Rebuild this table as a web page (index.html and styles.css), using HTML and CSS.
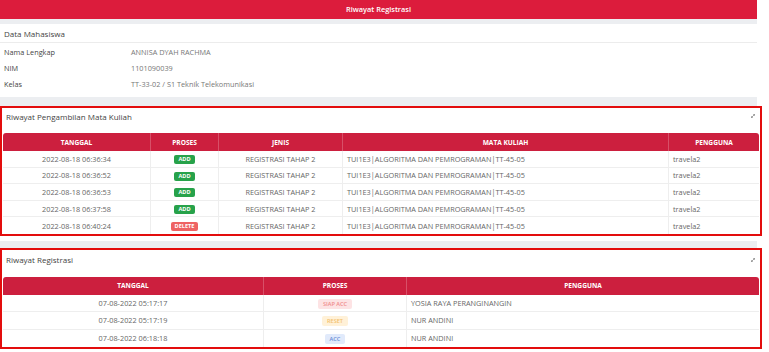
FILE: index.html
```html
<!DOCTYPE html>
<html lang="id">
<head>
<meta charset="utf-8">
<title>Riwayat Registrasi</title>
<link rel="stylesheet" href="styles.css">
</head>
<body>
<div class="page">
  <header class="topbar">Riwayat Registrasi</header>
  <main class="content">
    <section class="info-card">
      <div class="info-title">Data Mahasiswa</div>
      <div class="info-grid">
        <div class="lbl">Nama Lengkap</div><div class="val">ANNISA DYAH RACHMA</div>
        <div class="lbl">NIM</div><div class="val">1101090039</div>
        <div class="lbl">Kelas</div><div class="val">TT-33-02 / S1 Teknik Telekomunikasi</div>
      </div>
    </section>

    <section class="panel">
      <div class="frame frame-1">
        <div class="frame-head">
          <span>Riwayat Pengambilan Mata Kuliah</span>
          <svg class="expand" width="4" height="4" viewBox="0 0 4 4"><path d="M0.5 3.5 L3.5 0.5 M2.2 0.5 H3.5 V1.8 M0.5 2.2 V3.5 H1.8" fill="none" stroke="#666" stroke-width="0.6"/></svg>
        </div>
        <table class="tbl tbl-1">
          <colgroup><col class="c-tgl"><col class="c-pro"><col class="c-jen"><col class="c-mk"><col class="c-usr"></colgroup>
          <thead>
            <tr><th>TANGGAL</th><th>PROSES</th><th>JENIS</th><th>MATA KULIAH</th><th>PENGGUNA</th></tr>
          </thead>
          <tbody>
            <tr><td class="ctr">2022-08-18 06:36:34</td><td class="ctr"><span class="badge add">ADD</span></td><td class="ctr">REGISTRASI TAHAP 2</td><td>TUI1E3|ALGORITMA DAN PEMROGRAMAN|TT-45-05</td><td>travela2</td></tr>
            <tr><td class="ctr">2022-08-18 06:36:52</td><td class="ctr"><span class="badge add">ADD</span></td><td class="ctr">REGISTRASI TAHAP 2</td><td>TUI1E3|ALGORITMA DAN PEMROGRAMAN|TT-45-05</td><td>travela2</td></tr>
            <tr><td class="ctr">2022-08-18 06:36:53</td><td class="ctr"><span class="badge add">ADD</span></td><td class="ctr">REGISTRASI TAHAP 2</td><td>TUI1E3|ALGORITMA DAN PEMROGRAMAN|TT-45-05</td><td>travela2</td></tr>
            <tr><td class="ctr">2022-08-18 06:37:58</td><td class="ctr"><span class="badge add">ADD</span></td><td class="ctr">REGISTRASI TAHAP 2</td><td>TUI1E3|ALGORITMA DAN PEMROGRAMAN|TT-45-05</td><td>travela2</td></tr>
            <tr><td class="ctr">2022-08-18 06:40:24</td><td class="ctr"><span class="badge del">DELETE</span></td><td class="ctr">REGISTRASI TAHAP 2</td><td>TUI1E3|ALGORITMA DAN PEMROGRAMAN|TT-45-05</td><td>travela2</td></tr>
          </tbody>
        </table>
      </div>
    </section>

    <section class="panel">
      <div class="frame frame-2">
        <div class="frame-head head-2">
          <span>Riwayat Registrasi</span>
          <svg class="expand" width="4" height="4" viewBox="0 0 4 4"><path d="M0.5 3.5 L3.5 0.5 M2.2 0.5 H3.5 V1.8 M0.5 2.2 V3.5 H1.8" fill="none" stroke="#666" stroke-width="0.6"/></svg>
        </div>
        <table class="tbl tbl-2">
          <colgroup><col class="c2-tgl"><col class="c2-pro"><col class="c2-usr"></colgroup>
          <thead>
            <tr><th>TANGGAL</th><th>PROSES</th><th>PENGGUNA</th></tr>
          </thead>
          <tbody>
            <tr><td class="ctr">07-08-2022 05:17:17</td><td class="ctr"><span class="badge soft-red">SIAP ACC</span></td><td>YOSIA RAYA PERANGINANGIN</td></tr>
            <tr><td class="ctr">07-08-2022 05:17:19</td><td class="ctr"><span class="badge soft-yellow">RESET</span></td><td>NUR ANDINI</td></tr>
            <tr><td class="ctr">07-08-2022 06:18:18</td><td class="ctr"><span class="badge soft-blue">ACC</span></td><td>NUR ANDINI</td></tr>
          </tbody>
        </table>
      </div>
    </section>
  </main>
</div>
</body>
</html>
```
FILE: styles.css
```css
* { box-sizing: border-box; }

html, body {
  margin: 0;
  padding: 0;
  background: #ffffff;
}

body {
  font-family: "Open Sans", "Noto Sans", sans-serif;
  color: #555;
  width: 769px;
  height: 352px;
  overflow: hidden;
}

.page {
  width: 757px;
}

.topbar {
  height: 19px;
  line-height: 19px;
  background: #dc1c3c;
  color: #fff;
  font-size: 7.4px;
  font-weight: 600;
  text-align: center;
}

.content {
  background: #eceef1;
  padding-top: 5px;
  display: flex;
  flex-direction: column;
}

/* info card */
.info-card {
  background: #fff;
  height: 73px;
  margin-bottom: 9px;
}

.info-title {
  height: 19px;
  line-height: 19px;
  padding-left: 4px;
  font-size: 8px;
  color: #444;
  border-bottom: 1px solid #ececec;
}

.info-grid {
  display: grid;
  grid-template-columns: 127px 1fr;
  grid-auto-rows: 16px;
  padding: 1px 0 0 4px;
  font-size: 7.3px;
  line-height: 16px;
}

.info-grid .lbl { color: #444; }
.info-grid .val { color: #777; }

/* panels */
.panel {
  background: #fff;
  padding-bottom: 5px;
  margin-bottom: 7px;
}

.frame {
  width: 762px;
  border: 2px solid #e30d0d;
  background: #fff;
  padding: 0 1px;
}

.frame-head {
  height: 16px;
  margin-bottom: 9px;
  padding: 0 2px 0 3px;
  display: flex;
  align-items: center;
  justify-content: space-between;
  font-size: 8px;
  color: #444;
}

.head-2 {
  height: 20px;
  margin-bottom: 7px;
}

.expand {
  display: block;
  margin-right: 2px;
}

/* tables */
.tbl {
  width: 756px;
  border-collapse: separate;
  border-spacing: 0;
  table-layout: fixed;
}

.tbl th {
  background: #cc1f3e;
  color: #fff;
  font-size: 6.6px;
  font-weight: 700;
  height: 18px;
  padding: 0;
  text-align: center;
  border-left: 1px solid rgba(255, 255, 255, 0.22);
}

.tbl th:first-child {
  border-left: none;
  border-top-left-radius: 3px;
}

.tbl th:last-child {
  border-top-right-radius: 3px;
}

.tbl td {
  font-size: 7.3px;
  color: #666;
  padding: 0 0 0 4px;
  border-bottom: 1px solid #eeeeee;
  border-left: 1px solid #eeeeee;
  white-space: nowrap;
  overflow: hidden;
}

.tbl td:first-child { border-left: none; }

.tbl td.ctr {
  text-align: center;
  padding: 0;
}

.tbl-1 td { height: 16.6px; }
.tbl-2 td { height: 17.3px; }

.tbl tbody tr:last-child td { border-bottom: none; }

.c-tgl { width: 147px; }
.c-pro { width: 68px; }
.c-jen { width: 124px; }
.c-mk  { width: 326px; }
.c-usr { width: 91px; }

.c2-tgl { width: 260px; }
.c2-pro { width: 143px; }
.c2-usr { width: 353px; }

/* badges */
.badge {
  display: inline-block;
  font-size: 5.6px;
  font-weight: 700;
  line-height: 9px;
  padding: 0 4px;
  border-radius: 2px;
  vertical-align: middle;
}

.badge.add { background: #27a24a; color: #fff; }
.badge.del { background: #ee6363; color: #fff; padding: 0 3.5px; }
.badge.soft-red { background: #fde3e4; color: #f08c8c; padding: 0 4.5px; line-height: 10px; font-weight: 600; }
.badge.soft-yellow { background: #fff1d8; color: #f3c16d; padding: 0 4.5px; line-height: 10px; font-weight: 600; }
.badge.soft-blue { background: #e1eafb; color: #6a8ed6; padding: 0 4.5px; line-height: 10px; font-weight: 600; }
```
